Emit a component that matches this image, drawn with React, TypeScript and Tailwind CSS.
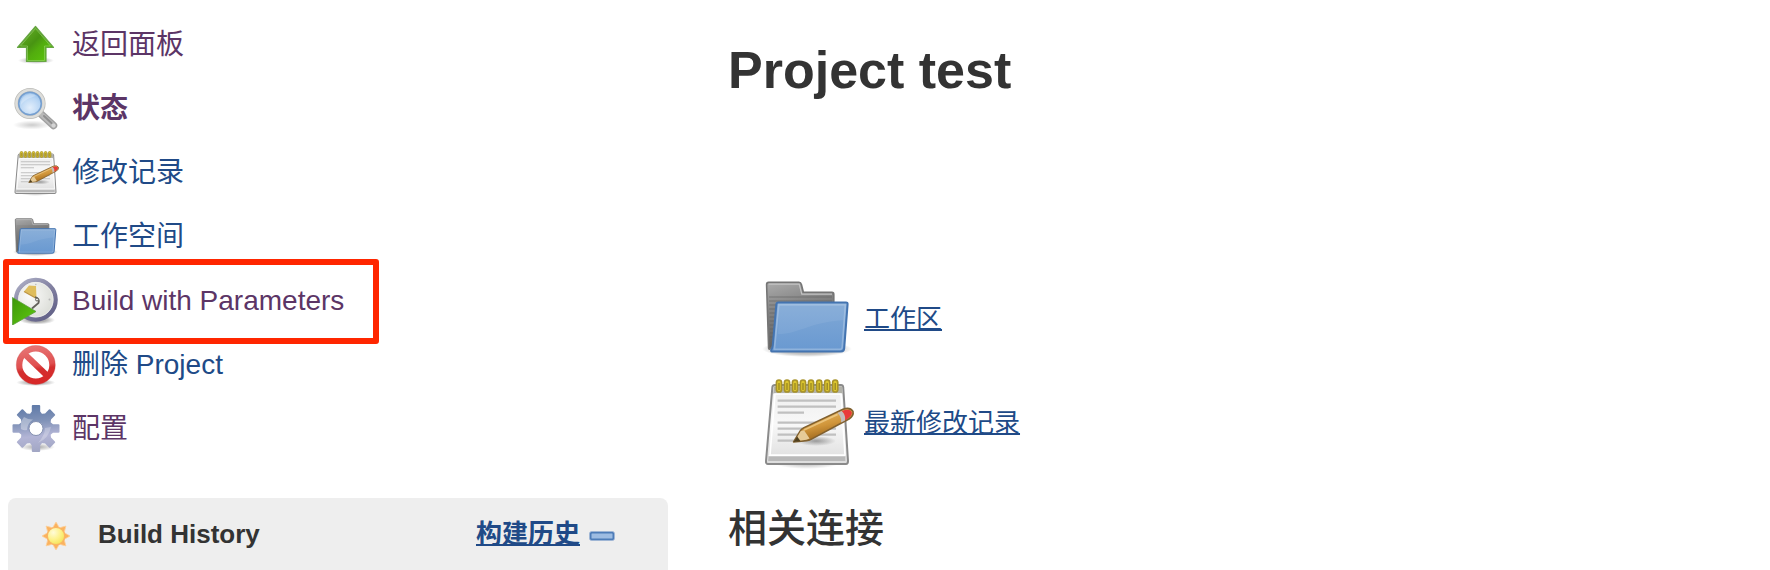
import type { ReactNode } from "react";

function ArrowUpIcon() {
  return (
    <svg viewBox="0 0 48 48" className="size-full" aria-hidden="true">
      <defs>
        <linearGradient id="arrow-fill" x1="0" y1="0" x2="1" y2="1">
          <stop offset="0" stopColor="#6fb52f" />
          <stop offset="0.45" stopColor="#489412" />
          <stop offset="0.6" stopColor="#52ad0e" />
          <stop offset="1" stopColor="#5cc90a" />
        </linearGradient>
        <radialGradient id="soft-shadow">
          <stop offset="0" stopColor="#000" stopOpacity="0.4" />
          <stop offset="1" stopColor="#000" stopOpacity="0" />
        </radialGradient>
      </defs>
      <ellipse cx="24" cy="39.5" rx="18" ry="3.5" fill="url(#soft-shadow)" />
      <path d="M23.5 5.500 41.500 26.500H34V40.500H14.500V26.500H5.500Z" fill="url(#arrow-fill)" stroke="#68a644" strokeWidth="1.200" strokeLinejoin="round" />
      <path d="M23.500 7.500 38.500 25H32.500V39.500H15.500V25H8.500Z" fill="none" stroke="#a5db7c" strokeOpacity="0.5" />
    </svg>
  );
}

function MagnifierIcon() {
  return (
    <svg viewBox="0 0 48 48" className="size-full" aria-hidden="true">
      <defs>
        <radialGradient id="lens-fill" cx="0.5" cy="0.65" r="0.6">
          <stop offset="0" stopColor="#e2eefb" />
          <stop offset="0.6" stopColor="#b9d6f4" />
          <stop offset="1" stopColor="#8fb9e6" />
        </radialGradient>
        <radialGradient id="lens-shadow">
          <stop offset="0" stopColor="#000" stopOpacity="0.2" />
          <stop offset="1" stopColor="#000" stopOpacity="0" />
        </radialGradient>
      </defs>
      <ellipse cx="20" cy="40" rx="19" ry="4.500" fill="url(#lens-shadow)" />
      <path d="M29 29 41.500 40.500" stroke="#a0a0a0" strokeWidth="7.500" strokeLinecap="round" />
      <path d="M29 29 41.500 40.500" stroke="#b8b8b8" strokeWidth="5" strokeLinecap="round" />
      <path d="M32 31 39.500 38" stroke="#8f8f8f" strokeWidth="2" strokeLinecap="round" />
      <circle cx="41.500" cy="40.500" r="2" fill="#d4d4d4" />
      <circle cx="18" cy="18.500" r="14" fill="url(#lens-fill)" />
      <circle cx="18" cy="18.500" r="13.600" fill="none" stroke="#bcbcb8" strokeWidth="4" />
      <circle cx="18" cy="18.500" r="13.600" fill="none" stroke="#dededb" strokeWidth="2.500" />
      <circle cx="18" cy="18.500" r="11.300" fill="none" stroke="#759fd0" strokeWidth="1.500" />
      <path d="M9 20a9.500 9.500 0 0 1 15-9c-5 1-12 4-15 9Z" fill="#fff" fillOpacity="0.25" />
    </svg>
  );
}

const ringXs = [9.5, 13.5, 17.5, 21.5, 25.5, 29.6, 33.6, 37.6];

function NotepadIcon({ id }: { id: string }) {
  return (
    <svg viewBox="0 0 48 48" className="size-full" aria-hidden="true">
      <defs>
        <linearGradient id={`${id}-page`} x1="0" y1="0" x2="0" y2="1">
          <stop offset="0" stopColor="#ededed" />
          <stop offset="0.5" stopColor="#f8f8f8" />
          <stop offset="1" stopColor="#dcdcdc" />
        </linearGradient>
        <radialGradient id={`${id}-shadow`}>
          <stop offset="0" stopColor="#000" stopOpacity="0.35" />
          <stop offset="1" stopColor="#000" stopOpacity="0" />
        </radialGradient>
        <linearGradient id={`${id}-pencil`} x1="0.35" y1="0.15" x2="0.65" y2="0.85">
          <stop offset="0" stopColor="#e6b35c" />
          <stop offset="0.5" stopColor="#d0953a" />
          <stop offset="1" stopColor="#9a641a" />
        </linearGradient>
      </defs>
      <ellipse cx="23.500" cy="43.500" rx="17" ry="3.500" style={{ fill: `url(#${id}-shadow)` }} />
      <path d="M7.400 5H40.500Q41.500 5 41.600 6L44 43Q44 44.500 43 44.500H4Q2.900 44.500 3 43L6.200 6Q6.400 5 7.400 5Z" style={{ fill: `url(#${id}-page)` }} stroke="#8a8a8a" strokeWidth="1" />
      <path d="M7 5.600H41L41.300 9.200H6.600Z" fill="#b2b2aa" />
      <path d="M7.500 9.500H40.500L42.500 40H5Z" fill="none" stroke="#fff" strokeWidth="0.800" />
      <path d="M4.300 40.300H42.700V43H4.100Z" fill="#b9b9b9" />
      <path d="M4.300 40.300H42.700" stroke="#fff" strokeWidth="0.600" />
      <path d="M8.800 12.800H38M8.800 15.800H38M8.800 18.800H22M8.800 23.800H38M8.800 26.800H38M8.800 29.800H38M8.800 32.800H22" stroke="#c0c0c0" strokeWidth="1.100" />
      {ringXs.map((x) => (
        <g key={x}>
          <rect x={x - 1.3} y="2.500" width="2.600" height="6" rx="1.300" fill="#dcc62e" stroke="#a8932a" strokeWidth="0.800" />
          <path d={`M${x} 4V7.500`} stroke="#9c8a22" strokeWidth="0.700" />
        </g>
      ))}
      <ellipse cx="28" cy="33" rx="10" ry="2.500" style={{ fill: `url(#${id}-shadow)` }} />
      <path d="M16.800 33.500 20.200 27.800Q20.800 26.900 22 26.300L41.500 17.100Q45 15.900 46.500 18.200Q47 20.300 44.500 22L25.500 32.200Q24.500 32.800 23.200 32.800Z" style={{ fill: `url(#${id}-pencil)` }} stroke="#80602f" strokeWidth="0.800" strokeLinejoin="round" />
      <path d="M17.300 33.200 20.400 28 22 27.600 24.800 31.800 23.200 32.400Z" fill="#e6cb98" />
      <path d="M16.800 33.500 18.600 30.700 20.300 33.100Z" fill="#50401f" />
      <path d="M38.700 19 40.900 18Q43 19.800 42.500 22.700L40.500 23.800Q41 21 38.700 19Z" fill="#c3bcbc" />
      <path d="M40.900 18Q44.900 16.500 45.900 18.600Q46.300 20.400 42.500 22.700Q43 19.800 40.900 18Z" fill="#e93a3a" />
      <path d="M22 27.500 38.800 19.700" stroke="#f8dca0" strokeOpacity="0.600" strokeWidth="0.900" />
    </svg>
  );
}

function FolderIcon({ id }: { id: string }) {
  return (
    <svg viewBox="0 0 48 48" className="size-full" aria-hidden="true">
      <defs>
        <linearGradient id={`${id}-back`} x1="0" y1="0" x2="0.300" y2="1">
          <stop offset="0" stopColor="#acacac" />
          <stop offset="0.400" stopColor="#858585" />
          <stop offset="1" stopColor="#5c5c5c" />
        </linearGradient>
        <linearGradient id={`${id}-front`} x1="0" y1="0" x2="0" y2="1">
          <stop offset="0" stopColor="#81a9d6" />
          <stop offset="1" stopColor="#6999d1" />
        </linearGradient>
        <radialGradient id={`${id}-shade`}>
          <stop offset="0" stopColor="#000" stopOpacity="0.450" />
          <stop offset="0.700" stopColor="#000" stopOpacity="0.200" />
          <stop offset="1" stopColor="#000" stopOpacity="0" />
        </radialGradient>
      </defs>
      <ellipse cx="23.500" cy="39" rx="22.500" ry="4" style={{ fill: `url(#${id}-shade)` }} />
      <path d="M4.300 5.700H19.500Q20.400 5.700 20.700 6.700L21.700 10.700H36Q36.900 10.700 36.900 11.700V38H6Q4.400 40 4.300 38.300L3.300 6.900Q3.300 5.700 4.300 5.700Z" style={{ fill: `url(#${id}-back)` }} stroke="#757575" strokeWidth="0.800" />
      <path d="M4.300 6.600H19.600L20.900 11.600H36" fill="none" stroke="#c4c4c4" strokeWidth="0.600" />
      <path d="M4.500 13H36M4.500 15H36M4.600 17H9M4.600 19H9M4.700 21H9M4.700 23H9M4.800 25H8M4.800 27H8M4.900 29H8M5 31H7.500M5 33H7.500" stroke="#606060" strokeOpacity="0.400" strokeWidth="0.700" />
      <path d="M9.100 15.700H43Q43.900 15.700 43.800 16.700L42.100 38.700Q42 40.200 40.500 40.200H6Q5.300 40.200 5.700 39.200Q6.300 38.200 6.400 37L8.200 16.600Q8.300 15.700 9.100 15.700Z" style={{ fill: `url(#${id}-front)` }} stroke="#4474b0" strokeWidth="1" />
      <path d="M9.400 16.800H42.700L41.100 38Q41 39.200 40 39.200H7.200L9.400 16.800Z" fill="none" stroke="#fff" strokeOpacity="0.250" strokeWidth="0.800" />
      <path d="M9 31.500C20 31.500 23 26 41.800 24.500L42.500 17H9.600Z" fill="#fff" fillOpacity="0.070" />
    </svg>
  );
}

function ClockPlayIcon() {
  return (
    <svg viewBox="0 0 48 48" className="size-full" aria-hidden="true">
      <defs>
        <linearGradient id="clock-rim" x1="0" y1="0" x2="0.700" y2="1">
          <stop offset="0" stopColor="#b0b2c8" />
          <stop offset="0.500" stopColor="#8483a3" />
          <stop offset="1" stopColor="#65648a" />
        </linearGradient>
        <radialGradient id="clock-face" cx="0.350" cy="0.400" r="0.700">
          <stop offset="0" stopColor="#fbfbfa" />
          <stop offset="1" stopColor="#d8dad4" />
        </radialGradient>
        <radialGradient id="clock-shadow">
          <stop offset="0.500" stopColor="#000" stopOpacity="0.300" />
          <stop offset="1" stopColor="#000" stopOpacity="0" />
        </radialGradient>
        <linearGradient id="play-fill" x1="0" y1="0" x2="1" y2="1">
          <stop offset="0" stopColor="#3d9609" />
          <stop offset="1" stopColor="#5fcb10" />
        </linearGradient>
      </defs>
      <ellipse cx="25" cy="43" rx="18" ry="4.500" fill="url(#clock-shadow)" />
      <circle cx="23.800" cy="22.700" r="19.800" fill="url(#clock-face)" stroke="url(#clock-rim)" strokeWidth="4.400" />
      <circle cx="23.800" cy="22.700" r="17.300" fill="none" stroke="#f0f0ee" strokeWidth="0.800" />
      <path d="M12 14.500 17 8.500 24 9 24.500 21.500Z" fill="#dfbd5c" />
      <path d="M12 14.500 24.500 21.500" stroke="#bd9544" strokeWidth="1.200" />
      <path d="M23 20Q28 21.500 26.500 26L20 31.500" fill="none" stroke="#62605a" strokeWidth="1.800" />
      <circle cx="25" cy="22.500" r="1.500" fill="#e5e5e5" stroke="#65645d" />
      <circle cx="37.500" cy="22.500" r="1" fill="#b8b8b8" />
      <circle cx="23.800" cy="7.500" r="0.800" fill="#bbb" />
      <path d="M0.500 20.500 24 34.500 0.500 48Z" fill="url(#play-fill)" stroke="#5a9e3c" strokeWidth="0.800" />
    </svg>
  );
}

function ProhibitedIcon() {
  return (
    <svg viewBox="0 0 48 48" className="size-full" aria-hidden="true">
      <defs>
        <linearGradient id="stop-red" gradientUnits="userSpaceOnUse" x1="20" y1="4" x2="26" y2="45">
          <stop offset="0" stopColor="#e77777" />
          <stop offset="0.500" stopColor="#e05050" />
          <stop offset="0.600" stopColor="#d32f2f" />
          <stop offset="1" stopColor="#d92626" />
        </linearGradient>
        <radialGradient id="stop-shadow">
          <stop offset="0.400" stopColor="#000" stopOpacity="0.300" />
          <stop offset="1" stopColor="#000" stopOpacity="0" />
        </radialGradient>
      </defs>
      <ellipse cx="23.800" cy="41.500" rx="19.500" ry="3.500" fill="url(#stop-shadow)" />
      <circle cx="23.800" cy="24" r="14" fill="#fff" />
      <circle cx="23.800" cy="24" r="16.500" fill="none" stroke="url(#stop-red)" strokeWidth="6" />
      <path d="M12.500 13 35.500 35" stroke="url(#stop-red)" strokeWidth="6" />
      <circle cx="23.800" cy="24" r="19.500" fill="none" stroke="#c64343" strokeOpacity="0.400" strokeWidth="0.800" />
    </svg>
  );
}

const eighths = [0, 45, 90, 135, 180, 225, 270, 315];

function GearIcon() {
  return (
    <svg viewBox="0 0 48 48" className="size-full" aria-hidden="true">
      <defs>
        <linearGradient id="gear-fill" gradientUnits="userSpaceOnUse" x1="22" y1="0" x2="27" y2="48">
          <stop offset="0" stopColor="#5f7aa8" />
          <stop offset="0.350" stopColor="#8193b8" />
          <stop offset="0.650" stopColor="#b3b5d6" />
          <stop offset="1" stopColor="#a0a5c2" />
        </linearGradient>
        <radialGradient id="gear-shadow">
          <stop offset="0" stopColor="#000" stopOpacity="0.350" />
          <stop offset="1" stopColor="#000" stopOpacity="0" />
        </radialGradient>
        <mask id="gear-hole">
          <rect width="48" height="48" fill="#fff" />
          <circle cx="24" cy="23.500" r="7" fill="#000" />
        </mask>
        <clipPath id="gear-shape">
          <circle cx="24" cy="23.500" r="16" />
          {eighths.map((angle) => (
            <path key={angle} d="M17 10 19.800 6.500V1Q19.800 0 20.800 0H27.200Q28.200 0 28.200 1V6.500L31 10Z" transform={`rotate(${angle} 24 23.500)`} />
          ))}
        </clipPath>
      </defs>
      <ellipse cx="25" cy="42" rx="18" ry="4" fill="url(#gear-shadow)" />
      <g mask="url(#gear-hole)">
        <rect width="48" height="48" fill="url(#gear-fill)" clipPath="url(#gear-shape)" />
      </g>
      <circle cx="24" cy="23.500" r="7" fill="none" stroke="#8490b0" strokeWidth="1" />
      <path d="M9 24A15 15 0 0 1 12 12Q17 15 21 14.500Q15.500 18 15 25Q12 26 9 24Z" fill="#fff" fillOpacity="0.350" />
      <path d="M39 22Q37 33 26 38Q33 30 33 23Z" fill="#fff" fillOpacity="0.250" />
    </svg>
  );
}

function SunIcon() {
  return (
    <svg viewBox="0 0 32 32" className="size-full" aria-hidden="true">
      <defs>
        <radialGradient id="sun-core" cx="0.350" cy="0.300" r="0.800">
          <stop offset="0" stopColor="#fffbd8" />
          <stop offset="0.500" stopColor="#fdf28c" />
          <stop offset="1" stopColor="#f4e04e" />
        </radialGradient>
      </defs>
      {eighths.map((angle) => (
        <path key={angle} d="M12.500 8 16 2 19.500 8Z" fill="#fbb25e" stroke="#fcd09c" strokeWidth="0.800" transform={`rotate(${angle} 16 16)`} />
      ))}
      <circle cx="16" cy="16" r="8.700" fill="url(#sun-core)" stroke="#f9b463" strokeWidth="1.300" />
    </svg>
  );
}

function CollapseIcon() {
  return (
    <svg viewBox="0 0 26 10" className="h-2.5 w-[26px]" aria-hidden="true">
      <rect x="1.500" y="1.500" width="23" height="7" rx="1.500" fill="#9dbce2" stroke="#4d7cb8" strokeWidth="2" />
      <rect x="0.500" y="0.500" width="25" height="9" rx="2" fill="none" stroke="#9fb6d6" strokeWidth="0.800" />
    </svg>
  );
}

type Task = { label: string; icon: ReactNode; tone: string; highlighted?: boolean };

const tasks: Task[] = [
  { label: "返回面板", icon: <ArrowUpIcon />, tone: "text-[#5c3566]" },
  { label: "状态", icon: <MagnifierIcon />, tone: "font-bold text-[#5c3566]" },
  { label: "修改记录", icon: <NotepadIcon id="task-notes" />, tone: "text-[#204a87]" },
  { label: "工作空间", icon: <FolderIcon id="task-folder" />, tone: "text-[#204a87]" },
  { label: "Build with Parameters", icon: <ClockPlayIcon />, tone: "text-[#5c3566]", highlighted: true },
  { label: "删除 Project", icon: <ProhibitedIcon />, tone: "text-[#204a87]" },
  { label: "配置", icon: <GearIcon />, tone: "text-[#5c3566]" },
];

export default function App() {
  return (
    <div className="flex items-start bg-white font-['Liberation_Sans','Noto_Sans_CJK_SC',sans-serif] text-[#333333]">
      <aside className="w-[668px] shrink-0 pt-[13px] pl-2">
        <nav>
          <ul className="pl-1">
            {tasks.map((task) => (
              <li key={task.label} className="relative flex h-16 items-center">
                <a href="#" className={`flex items-center gap-3 text-[28px] leading-10 ${task.tone}`}>
                  <span className="size-12 shrink-0">{task.icon}</span>
                  {task.label}
                </a>
                {task.highlighted && (
                  <span className="pointer-events-none absolute -top-2.5 -left-[9px] z-10 h-[85px] w-[376px] rounded-[3px] border-6 border-[#ff2600]" />
                )}
              </li>
            ))}
          </ul>
        </nav>
        <section className="mt-[37px] flex h-[72px] items-center rounded-t-lg bg-[#eeeeee] pr-[53px] pl-8 text-[26px] leading-8 font-bold">
          <span className="mt-1 size-8 shrink-0">
            <SunIcon />
          </span>
          <h2 className="ml-[26px]">Build History</h2>
          <a href="#" className="ml-auto text-[#204a87] underline decoration-2 underline-offset-1 [text-decoration-skip-ink:none]">
            构建历史
          </a>
          <button type="button" aria-label="Collapse" className="mt-1 ml-[9px]">
            <CollapseIcon />
          </button>
        </section>
      </aside>
      <main className="min-w-0 flex-1 pt-10 pl-[60px]">
        <h1 className="text-[52px] leading-[60px] font-bold">Project test</h1>
        <ul className="mt-[167px] pl-8">
          <li className="flex h-[104px] items-center gap-2">
            <span className="size-24 shrink-0">
              <FolderIcon id="main-folder" />
            </span>
            <a href="#" className="text-[26px] leading-8 text-[#204a87] underline decoration-2 underline-offset-1 [text-decoration-skip-ink:none]">
              工作区
            </a>
          </li>
          <li className="flex h-[104px] items-center gap-2">
            <span className="size-24 shrink-0">
              <NotepadIcon id="main-notes" />
            </span>
            <a href="#" className="text-[26px] leading-8 text-[#204a87] underline decoration-2 underline-offset-1 [text-decoration-skip-ink:none]">
              最新修改记录
            </a>
          </li>
        </ul>
        <h2 className="mt-7 text-[39px] leading-[52px] font-medium">相关连接</h2>
      </main>
    </div>
  );
}
